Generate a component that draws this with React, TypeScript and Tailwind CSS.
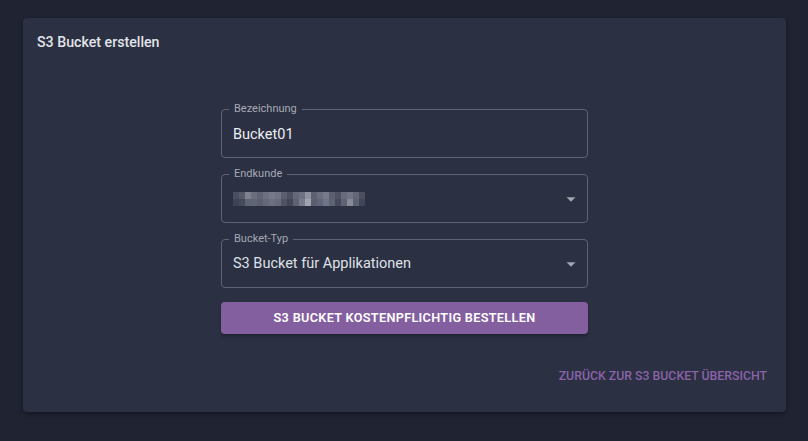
import React from "react";

const mosaicTop = ["#4a4f60","#555a6b","#7d8190","#6a6e7d","#5f6373","#6c7080","#757988","#6f7383","#5a5e6e","#4c5061","#646878","#6e7282","#8f93a0","#5c6070","#6a6e7e","#767a89","#5b5f6f","#4e5263","#676b7b","#707484","#626676","#4b4f60"];
const mosaicBot = ["#3d4254","#454a5b","#5e6272","#606474","#5a5e6e","#646878","#6b6f7e","#666a7a","#4e5263","#424657","#5d6171","#777b8a","#9fa3ae","#5a5e6e","#61657a","#70748a","#5e6272","#44485a","#5f6373","#878b98","#5d6171","#41455a"];

function Caret() {
  return (
    <svg width="10" height="5" viewBox="0 0 10 5" className="absolute right-[11px] top-[22px]" fill="#a3a6b0">
      <path d="M0.5 0.3h9l-4.5 4.4z" />
    </svg>
  );
}

function Field({ label, children, select }: { label: string; children: React.ReactNode; select?: boolean }) {
  return (
    <div className="relative h-[49px] rounded-[4px] border border-[#5f6372] flex items-center pl-[11px]">
      <span className="absolute left-[7px] top-[-8px] px-[5px] bg-[#2b3043] text-[11px] leading-[14px] text-[#a6a9b3]">
        {label}
      </span>
      {children}
      {select && <Caret />}
    </div>
  );
}

export default function App() {
  return (
    <div
      className="w-[808px] h-[441px] bg-[#1f2332] pt-[18px] pl-[23px]"
      style={{ fontFamily: "Roboto, 'Liberation Sans', sans-serif" }}
    >
      <div className="w-[763px] h-[394px] bg-[#2b3043] rounded-[4px] shadow-[0_2px_4px_rgba(0,0,0,0.35)] flex flex-col">
        <div className="pt-[14px] pl-[14px] text-[14.2px] leading-[20px] font-medium text-[#e3e4e9]">
          S3 Bucket erstellen
        </div>
        <div className="w-[367px] ml-[198px] mt-[57px] flex flex-col">
          <Field label="Bezeichnung">
            <span className="text-[14.5px] text-[#eceef2] leading-[20px] pt-[3px]">Bucket01</span>
          </Field>
          <div className="h-[15.5px]" />
          <Field label="Endkunde" select>
            <div className="flex flex-col mt-[1px]">
              <div className="flex">
                {mosaicTop.map((c, i) => (
                  <div key={i} className="w-[6px] h-[7px]" style={{ backgroundColor: c }} />
                ))}
              </div>
              <div className="flex">
                {mosaicBot.map((c, i) => (
                  <div key={i} className="w-[6px] h-[7px]" style={{ backgroundColor: c }} />
                ))}
              </div>
            </div>
          </Field>
          <div className="h-[16px]" />
          <Field label="Bucket-Typ" select>
            <span className="text-[14.5px] text-[#dfe1e6] leading-[20px] pt-[2px]">S3 Bucket für Applikationen</span>
          </Field>
          <div className="h-[14px]" />
          <button className="h-[32px] rounded-[4px] bg-[#845fa0] text-white text-[12.7px] font-semibold tracking-[0.025em] shadow-[0_2px_3px_rgba(0,0,0,0.3)]">
            S3 BUCKET KOSTENPFLICHTIG BESTELLEN
          </button>
        </div>
        <div className="flex justify-end pr-[19px] mt-[32px]">
          <span className="text-[12.3px] leading-[20px] font-medium text-[#8a63a8]">
            ZURÜCK ZUR S3 BUCKET ÜBERSICHT
          </span>
        </div>
      </div>
    </div>
  );
}
